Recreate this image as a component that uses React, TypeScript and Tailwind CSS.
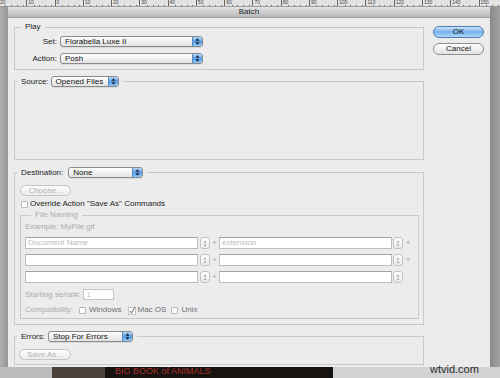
import React from "react";

const rulerMarks = ["20", "10", "0", "10", "20", "30", "40", "50", "60", "70", "80", "90", "100", "110", "120", "130", "140", "150"];

function Popup({ label, w }: { label: string; w: string }) {
  return (
    <div
      className={`flex h-[11px] ${w} overflow-hidden rounded-[3px] border border-[#8a8a8a] bg-gradient-to-b from-white to-[#e2e2e2] shadow-[0_1px_0_rgba(0,0,0,0.08)]`}
    >
      <span className="flex-1 truncate pl-[4px] leading-[9px] text-[#111]">{label}</span>
      <span className="flex w-[10px] items-center justify-center border-l border-[#5a8cc6] bg-gradient-to-b from-[#b3d6f8] via-[#5c9ee8] to-[#8fc5f7]">
        <svg width="5" height="7" viewBox="0 0 5 7">
          <path d="M2.5 0.3 L4.6 2.8 H0.4 Z M2.5 6.7 L4.6 4.2 H0.4 Z" fill="#1c2738" />
        </svg>
      </span>
    </div>
  );
}

function Stepper() {
  return (
    <span className="flex h-[12px] w-[10px] shrink-0 items-center justify-center rounded-[3px] border border-[#c2c2c2] bg-gradient-to-b from-white to-[#ebebeb]">
      <svg width="4" height="7" viewBox="0 0 4 7">
        <path d="M2 0.5 L3.6 2.6 H0.4 Z M2 6.5 L3.6 4.4 H0.4 Z" fill="#a0a0a0" />
      </svg>
    </span>
  );
}

function Field({ text }: { text?: string }) {
  return (
    <div className="h-[12px] w-[173px] shrink-0 border border-[#bdbdbd] border-t-[#a3a3a3] bg-white pl-[2px] leading-[10px] text-[#bdbdbd]">
      {text}
    </div>
  );
}

function Pill({ label, w }: { label: string; w: string }) {
  return (
    <div
      className={`h-[11px] ${w} rounded-full border border-[#c4c4c4] bg-gradient-to-b from-[#fcfcfc] to-[#ededed] text-center leading-[9px] text-[#b3b3b3]`}
    >
      {label}
    </div>
  );
}

function Box({ checked }: { checked?: boolean }) {
  if (checked) {
    return (
      <svg width="8" height="9" viewBox="0 0 8 9" className="shrink-0">
        <rect x="0.5" y="1.5" width="7" height="7" fill="#fff" stroke="#c4c4c4" />
        <path d="M1.8 4.8 L3.4 7 L7.2 0.6" fill="none" stroke="#8a8a8a" strokeWidth="1.1" />
      </svg>
    );
  }
  return <span className="h-[7px] w-[7px] shrink-0 rounded-[1px] border border-[#b8b8b8] bg-white" />;
}

function NameRow({ first, second, plus }: { first?: string; second?: string; plus: boolean }) {
  return (
    <div className="flex items-center">
      <Field text={first} />
      <span className="ml-[2px]">
        <Stepper />
      </span>
      <span className="w-[9px] text-center text-[#a8a8a8]">+</span>
      <Field text={second} />
      <span className="ml-[1px]">
        <Stepper />
      </span>
      <span className="w-[10px] text-center text-[#a8a8a8]">{plus ? "+" : ""}</span>
    </div>
  );
}

export default function App() {
  return (
    <div className="relative h-[378px] w-[500px] overflow-hidden bg-[#a6a6a6] font-['Liberation_Sans',Arial,sans-serif] text-[8px] leading-[10px] text-[#222]">
      {/* ruler */}
      <div className="flex h-[7px] overflow-hidden border-b border-[#9c9c9c] bg-[#e3e3e3]">
        <div className="-ml-[2px] flex">
          {rulerMarks.map((m, i) => (
            <div key={i} className="flex h-[6px] w-[28.27px] shrink-0 flex-col border-l border-[#666]">
              <span className="pl-[1px] text-[5px] leading-[4px] text-[#444]">{m}</span>
              <div className="mt-[1px] flex justify-around pl-[4px]">
                <span className="h-[1px] w-[1px] bg-[#666]" />
                <span className="h-[1px] w-[1px] bg-[#666]" />
                <span className="h-[1px] w-[1px] bg-[#666]" />
                <span className="h-[1px] w-[1px] bg-[#666]" />
              </div>
            </div>
          ))}
        </div>
      </div>

      {/* window row */}
      <div className="flex h-[360px]">
        <div className="w-[8px] bg-gradient-to-r from-[#b0b0b0] to-[#979797]" />
        <div className="flex w-[482px] flex-col bg-[#ececec]">
          <div className="flex h-[11px] items-center justify-center border-b border-[#9d9d9d] bg-gradient-to-b from-[#e4e4e4] to-[#b9b9b9] text-[#1e1e1e]">
            Batch
          </div>

          <div className="flex gap-[9px] px-[6px] pt-[4px]">
            <div className="flex w-[410px] flex-col">
              {/* Play */}
              <fieldset className="min-w-0 border border-[#c9c9c9] pt-[4px] pb-[5px]">
                <legend className="ml-[6px] px-[4px] leading-[10px] text-[#222]">Play</legend>
                <div className="flex items-center">
                  <span className="w-[42px] text-right">Set:</span>
                  <div className="ml-[3px]">
                    <Popup label="Florabella Luxe II" w="w-[143px]" />
                  </div>
                </div>
                <div className="mt-[6px] flex items-center">
                  <span className="w-[42px] text-right">Action:</span>
                  <div className="ml-[3px]">
                    <Popup label="Posh" w="w-[143px]" />
                  </div>
                </div>
              </fieldset>

              {/* Source */}
              <fieldset className="mt-[6px] min-w-0 border border-[#c9c9c9]">
                <legend className="ml-[2px] px-[4px]">
                  <div className="flex items-center gap-[2px]">
                    <span>Source:</span>
                    <Popup label="Opened Files" w="w-[68px]" />
                  </div>
                </legend>
                <div className="h-[72px]" />
              </fieldset>

              {/* Destination */}
              <fieldset className="mt-[7px] min-w-0 border border-[#c9c9c9] pt-[7px] pb-[5px]">
                <legend className="ml-[2px] px-[4px]">
                  <div className="flex items-center gap-[5px]">
                    <span>Destination:</span>
                    <Popup label="None" w="w-[75px]" />
                  </div>
                </legend>
                <div className="ml-[5px]">
                  <Pill label="Choose..." w="w-[51px]" />
                </div>
                <div className="mt-[3px] ml-[6px] flex items-center gap-[2px]">
                  <Box />
                  <span>Override Action "Save As" Commands</span>
                </div>

                <fieldset className="mt-[1px] mr-[4px] ml-[5px] min-w-0 border border-[#c9c9c9] pt-[2px] pb-[3px] pl-[4px]">
                  <legend className="ml-[6px] px-[4px] text-[#ababab]">File Naming</legend>
                  <div className="text-[#ababab]">Example: MyFile.gif</div>
                  <div className="mt-[5px] flex flex-col gap-[5px]">
                    <NameRow first="Document Name" second="extension" plus />
                    <NameRow plus />
                    <NameRow plus={false} />
                  </div>
                  <div className="mt-[6px] flex items-center">
                    <span className="text-[#ababab]">Starting serial#:</span>
                    <div className="ml-[2px] h-[11px] w-[31px] border border-[#c4c4c4] bg-white pl-[3px] leading-[9px] text-[#c4c4c4]">
                      1
                    </div>
                  </div>
                  <div className="mt-[5px] flex items-center">
                    <span className="text-[#ababab]">Compatibility:</span>
                    <span className="ml-[6px] flex items-center">
                      <Box />
                    </span>
                    <span className="ml-[3px] text-[#6e6e6e]">Windows</span>
                    <span className="ml-[7px] flex items-center">
                      <Box checked />
                    </span>
                    <span className="ml-[1px] text-[#6e6e6e]">Mac OS</span>
                    <span className="ml-[5px] flex items-center">
                      <Box />
                    </span>
                    <span className="ml-[3px] text-[#6e6e6e]">Unix</span>
                  </div>
                </fieldset>
              </fieldset>

              {/* Errors */}
              <fieldset className="mt-[6px] min-w-0 border border-[#c9c9c9] pt-[7px] pb-[4px]">
                <legend className="ml-[2px] px-[4px]">
                  <div className="flex items-center gap-[3px]">
                    <span>Errors:</span>
                    <Popup label="Stop For Errors" w="w-[85px]" />
                  </div>
                </legend>
                <div className="ml-[4px]">
                  <Pill label="Save As..." w="w-[52px]" />
                </div>
              </fieldset>
            </div>

            {/* buttons */}
            <div className="flex w-[51px] flex-col pt-[4px]">
              <div className="h-[12px] rounded-full border border-[#4f7db3] bg-gradient-to-b from-[#cfe6fc] via-[#76b0ee] to-[#b2d9fb] text-center leading-[10px] text-[#111]">
                OK
              </div>
              <div className="mt-[5px] h-[12px] rounded-full border border-[#8f8f8f] bg-gradient-to-b from-white to-[#e3e3e3] text-center leading-[10px] text-[#111]">
                Cancel
              </div>
            </div>
          </div>
        </div>
        <div className="w-[10px] bg-gradient-to-r from-[#8a8a8a] to-[#a2a2a2]" />
      </div>

      {/* background below the dialog */}
      <div className="flex h-[11px]">
        <div className="w-[52px] bg-[#bcbcbc]" />
        <div className="w-[53px] bg-[#4b433c]" />
        <div className="w-[228px] bg-[#171311] pl-[10px] text-[9px] leading-[9px] text-[#a3302a]">BIG BOOK of ANIMALS</div>
        <div className="flex-1 bg-[#d2d2d2]" />
      </div>

      <span className="absolute top-[363px] left-[430px] text-[11px] leading-[12px] text-[#2b2b2b]">wtvid.com</span>
    </div>
  );
}
